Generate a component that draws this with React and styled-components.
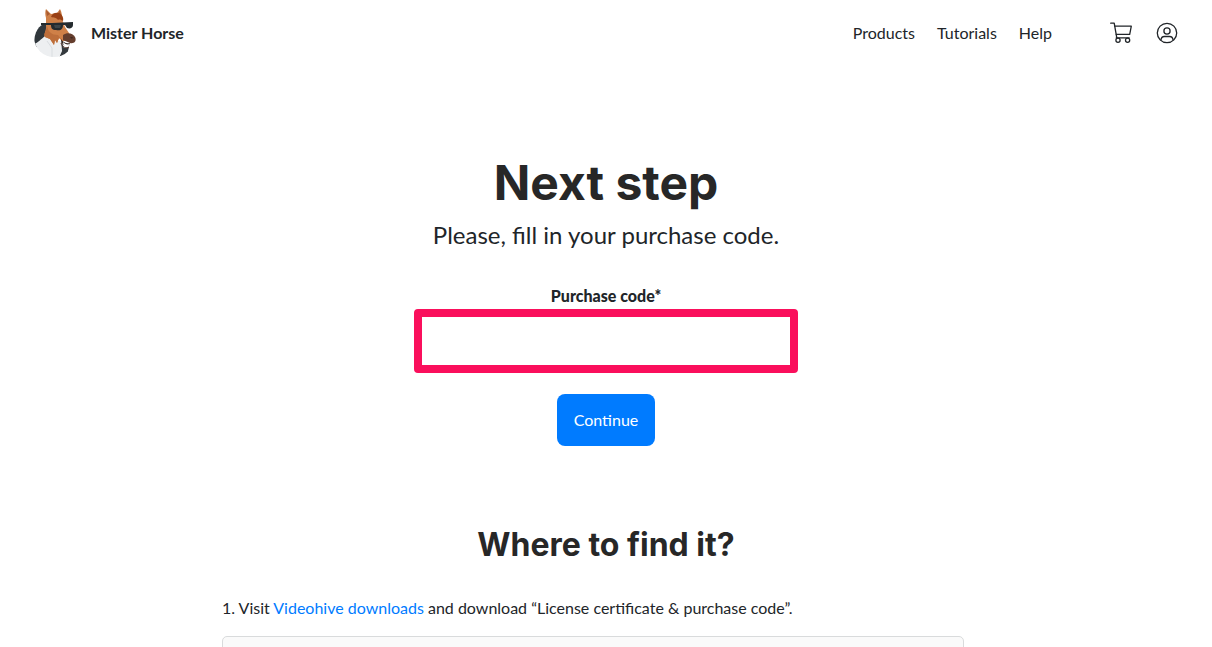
import React from "react"
import styled, { createGlobalStyle } from "styled-components"

const GlobalStyle = createGlobalStyle`
  * {
    box-sizing: border-box;
  }
  body {
    margin: 0;
    background: #fff;
    color: #212529;
    font-family: Lato, sans-serif;
    font-size: 16px;
    line-height: 24px;
  }
`
const Header = styled.header`
  display: flex;
  align-items: center;
  justify-content: space-between;
  height: 66px;
  padding: 0 34px;
`
const Brand = styled.a`
  display: flex;
  align-items: center;
  gap: 14px;
  color: #212529;
  font-weight: 700;
  text-decoration: none;
`
const Nav = styled.nav`
  display: flex;
  align-items: center;
  gap: 22px;
`
const NavLink = styled.a`
  color: #212529;
  text-decoration: none;
`
const Icons = styled.div`
  display: flex;
  align-items: center;
  gap: 24px;
  margin-left: 36px;
`
const IconLink = styled.a`
  display: block;
  height: 22px;
  color: #212529;
`
const Main = styled.main`
  max-width: 768px;
  margin: 0 auto;
  padding-top: 88px;
`
const Title = styled.h1`
  margin: 0;
  color: #272727;
  font-family: Inter, sans-serif;
  font-size: 48px;
  font-weight: 700;
  line-height: 58px;
  text-align: center;
`
const Lead = styled.p`
  margin: 5px 0 31px;
  font-size: 24px;
  line-height: 36px;
  text-align: center;
`
const Form = styled.form`
  display: flex;
  flex-direction: column;
  align-items: center;
`
const Label = styled.label`
  font-weight: 900;
`
const CodeInput = styled.input`
  width: 100%;
  max-width: 384px;
  height: 64px;
  margin: 1px 0 21px;
  padding: 0 16px;
  border: 8px solid #fa0f5c;
  border-radius: 4px;
  outline: none;
  background: #fff;
  color: #212529;
  font: inherit;
`
const Button = styled.button`
  height: 52px;
  padding: 0 17px;
  border: 0;
  border-radius: 8px;
  background: #007bff;
  color: #fff;
  font: inherit;
  cursor: pointer;
`
const Subtitle = styled.h2`
  margin: 79px 0 31px;
  color: #272727;
  font-family: Inter, sans-serif;
  font-size: 32px;
  font-weight: 700;
  line-height: 40px;
  text-align: center;
`
const Step = styled.p`
  margin: 0 0 16px;
`
const StepLink = styled.a`
  color: #007bff;
  text-decoration: none;
`
const Preview = styled.div`
  max-width: 742px;
  height: 200px;
  border: 1px solid #d9dbdc;
  border-radius: 5px;
  background: #fafafa;
`

const HorseLogo = () => (
  <svg width="43" height="50" viewBox="0 0 43 50" aria-hidden="true">
    <defs>
      <clipPath id="disc">
        <circle cx="20" cy="29" r="20" />
      </clipPath>
    </defs>
    <g clipPath="url(#disc)">
      <path d="M0 36 C0 24 5 17 12 15 L16 34 L0 40 Z" fill="#30373c" />
      <path d="M0 36 C4 35 7 31 11 28 L20 33 L27 33 L28 50 H0 Z" fill="#edeff1" />
      <path d="M13 33 L18 40 L18 50" fill="none" stroke="#d9dde0" />
      <path d="M27 32 L30 40 L35 39 L33 47 L25 50 L28 43 Z" fill="#343a3e" />
    </g>
    <path d="M12 10 C11 7 11 3 12 1 L17 6 L23 5 L26 1 C28 4 28 8 28 11 L31 19 L35 25 L34 33 L28 33 L25 30 L23 35 L21 32 L20 37 L16 31 L11 29 C9 26 13 22 12 17 Z" fill="#cf8048" />
    <path d="M12 2 L13 8 L16 6 Z M26 2 L24 6 L27 9 Z" fill="#a95c32" />
    <path d="M13 18 C14 24 18 27 24 27 L28 32 L25 30 L23 35 L21 32 L20 37 L16 31 L11 29 C9 26 13 22 13 18 Z" fill="#bd6e3b" />
    <path d="M17 9 C18 5 22 4 25 5 C28 6 30 10 29 13 C27 12 26 11 24 12 C22 9 20 10 17 9 Z" fill="#994014" />
    <path d="M7 15 L18 15 L39 14 L39 17 C39 20 36 21 33 20 L31 17 L29 17 C29 21 27 23 22 22 C18 22 17 20 17 17 L7 17 Z" fill="#242b2f" />
    <path d="M20 17 L27 17 L26 20 L21 20 Z" fill="#3c4549" />
    <path d="M29 27 C33 24 39 25 41 29 C43 33 40 36 36 35 L29 32 Z" fill="#653e2e" />
    <path d="M36 29 L39 29 L38 31 Z" fill="#412920" />
    <path d="M27 31 C29 34 32 36 36 35 L35 38 C31 39 27 36 27 31 Z" fill="#33251f" />
    <path d="M29 34 C31 36 33 37 36 36 L34 39 C31 39 29 37 29 34 Z" fill="#fff" />
    <path d="M27 35 C28 39 32 41 35 39" fill="none" stroke="#5a392d" />
  </svg>
)

const CartIcon = () => (
  <svg width="22" height="22" viewBox="0 0 22 22" fill="none" stroke="currentColor" strokeWidth="1.3" strokeLinecap="round" strokeLinejoin="round">
    <path d="M.7 1.2 H4.2 L6.8 15.8 M6.2 15.8 H19.2" />
    <path d="M4.8 4.2 H21.3 L19.7 12.3 H6.2" />
    <circle cx="8" cy="18.3" r="2.1" />
    <circle cx="17.6" cy="18.3" r="2.1" />
  </svg>
)

const UserIcon = () => (
  <svg width="22" height="22" viewBox="0 0 22 22" fill="none" stroke="currentColor" strokeWidth="1.3">
    <circle cx="11" cy="11" r="9.7" />
    <circle cx="11" cy="9" r="3.1" />
    <path d="M4.8 18.4 C5.2 15.6 6.5 14.5 8.3 14.5 H13.7 C15.5 14.5 16.8 15.6 17.2 18.4" />
  </svg>
)

const App = () => (
  <>
    <GlobalStyle />
    <Header>
      <Brand href="#">
        <HorseLogo />
        Mister Horse
      </Brand>
      <Nav>
        <NavLink href="#">Products</NavLink>
        <NavLink href="#">Tutorials</NavLink>
        <NavLink href="#">Help</NavLink>
        <Icons>
          <IconLink href="#" aria-label="Cart">
            <CartIcon />
          </IconLink>
          <IconLink href="#" aria-label="Account">
            <UserIcon />
          </IconLink>
        </Icons>
      </Nav>
    </Header>
    <Main>
      <Title>Next step</Title>
      <Lead>Please, fill in your purchase code.</Lead>
      <Form>
        <Label htmlFor="purchase-code">Purchase code*</Label>
        <CodeInput id="purchase-code" type="text" />
        <Button type="button">Continue</Button>
      </Form>
      <Subtitle>Where to find it?</Subtitle>
      <Step>
        1. Visit <StepLink href="#">Videohive downloads</StepLink> and download “License certificate &amp; purchase code”.
      </Step>
      <Preview />
    </Main>
  </>
)

export default App
